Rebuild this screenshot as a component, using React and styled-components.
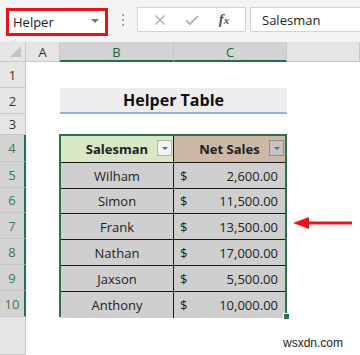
import { Fragment } from "react";
import styled, { createGlobalStyle } from "styled-components";

const GlobalStyle = createGlobalStyle`
  html, body {
    margin: 0;
    padding: 0;
    background: #ffffff;
    font-family: "Open Sans", "Liberation Sans", sans-serif;
  }
`;

const Page = styled.div`
  width: 360px;
  height: 355px;
  overflow: hidden;
  position: relative;
  background: #ffffff;
`;

const Toolbar = styled.div`
  height: 42px;
  background: #f3f3f3;
  display: flex;
  align-items: flex-start;
  padding-top: 7px;
  box-sizing: border-box;
`;

const NameBox = styled.div`
  margin-left: 6px;
  width: 102px;
  height: 28px;
  box-sizing: border-box;
  border: 3px solid #e3131b;
  background: #ffffff;
  display: flex;
  align-items: center;
  justify-content: space-between;
  padding: 0 6px 0 4px;
  margin-top: 1px;
  font-size: 13px;
  color: #222;
`;

const Caret = styled.span`
  width: 0;
  height: 0;
  border-left: 4px solid transparent;
  border-right: 4px solid transparent;
  border-top: 4px solid #777;
  margin-top: -2px;
`;

const Dots = styled.div`
  width: 29px;
  display: flex;
  flex-direction: column;
  align-items: center;
  gap: 3px;
  padding-top: 7px;
  span {
    width: 2px;
    height: 2px;
    background: #a8a8a8;
  }
`;

const FxBox = styled.div`
  width: 109px;
  height: 25px;
  box-sizing: border-box;
  border: 1px solid #d4d4d4;
  background: #ffffff;
  display: flex;
  align-items: center;
  justify-content: space-around;
  padding: 0 6px;
  color: #b3b3b3;
`;

const Fx = styled.span`
  font-family: "Liberation Serif", "DejaVu Serif", serif;
  font-style: italic;
  font-weight: 700;
  font-size: 15px;
  color: #555;
  span {
    font-size: 11px;
  }
`;

const FormulaInput = styled.div`
  margin-left: 4px;
  flex: 1;
  height: 25px;
  box-sizing: border-box;
  border: 1px solid #d4d4d4;
  border-right: none;
  background: #ffffff;
  display: flex;
  align-items: center;
  padding-left: 11px;
  font-size: 13px;
  color: #222;
`;

const Sheet = styled.div`
  display: grid;
  grid-template-columns: 26px 34px 114px 113px 1fr;
  grid-template-rows: 20px 26px 26px 21px 27px 26px 25px 26px 26px 26px 26px 1fr;
  height: 313px;
  position: relative;
`;

const Corner = styled.div`
  grid-column: 1;
  grid-row: 1;
  background: #e6e6e6;
  border-right: 1px solid #c8c8c8;
  border-bottom: 1px solid #c8c8c8;
  box-sizing: border-box;
  position: relative;
  &::after {
    content: "";
    position: absolute;
    right: 4px;
    bottom: 4px;
    width: 0;
    height: 0;
    border-left: 11px solid transparent;
    border-bottom: 11px solid #c2c2c2;
  }
`;

const ColHead = styled.div`
  grid-row: 1;
  grid-column: ${(p) => p.$col};
  background: ${(p) => (p.$sel ? "#d3d3d3" : "#e6e6e6")};
  border-right: 1px solid #c8c8c8;
  border-bottom: ${(p) => (p.$sel ? "2px solid #217346" : "1px solid #c8c8c8")};
  box-sizing: border-box;
  display: flex;
  align-items: center;
  justify-content: center;
  font-size: 13px;
  color: ${(p) => (p.$sel ? "#2c5e3c" : "#333")};
  padding-top: 1px;
`;

const RowHead = styled.div`
  grid-column: 1;
  background: ${(p) => (p.$sel ? "#d3d3d3" : "#e6e6e6")};
  border-right: ${(p) => (p.$sel ? "2px solid #217346" : "1px solid #c8c8c8")};
  border-bottom: 1px solid #c8c8c8;
  box-sizing: border-box;
  display: flex;
  align-items: center;
  justify-content: center;
  font-size: 13px;
  color: ${(p) => (p.$sel ? "#3c7a50" : "#333")};
`;

const Title = styled.div`
  grid-column: 3 / 5;
  grid-row: 3;
  background: #ededed;
  border-bottom: 2px solid #9bb0d8;
  box-sizing: border-box;
  display: flex;
  align-items: center;
  justify-content: center;
  font-weight: 700;
  font-size: 16px;
  color: #111;
`;

const Table = styled.div`
  grid-column: 3 / 5;
  grid-row: 5 / 12;
  margin: -1px 0 0 -1px;
  border: 2px solid #2e7048;
  display: grid;
  grid-template-columns: 113px 1fr;
  grid-template-rows: 27px 26px 25px 26px 26px 26px 26px;
  position: relative;
  font-size: 13px;
  color: #222;
`;

const Cell = styled.div`
  background: ${(p) => p.$bg || "#cfcfcf"};
  border-bottom: ${(p) => (p.$last ? "none" : "1px solid #1a1a1a")};
  border-right: ${(p) => (p.$right ? "none" : "1px solid #1a1a1a")};
  box-sizing: border-box;
  display: flex;
  align-items: center;
  justify-content: ${(p) => (p.$money ? "space-between" : "center")};
  padding: ${(p) => (p.$money ? "0 7px 0 6px" : "0")};
  font-weight: ${(p) => (p.$head ? 700 : 400)};
  position: relative;
`;

const FilterBtn = styled.span`
  position: absolute;
  right: 1px;
  top: 4px;
  width: 15px;
  height: 16px;
  box-sizing: border-box;
  border: 1px solid ${(p) => (p.$dark ? "#8f8f8f" : "#b5b5b5")};
  background: ${(p) => (p.$dark ? "#c3c3c3" : "#f4f4f4")};
  display: flex;
  align-items: center;
  justify-content: center;
  &::after {
    content: "";
    width: 0;
    height: 0;
    border-left: 3px solid transparent;
    border-right: 3px solid transparent;
    border-top: 3px solid #666;
  }
`;

const Handle = styled.span`
  position: absolute;
  right: -5px;
  bottom: -5px;
  width: 5px;
  height: 5px;
  background: #2e7048;
  border: 1px solid #ffffff;
`;

const Arrow = styled.svg`
  position: absolute;
  left: 293px;
  top: 215px;
`;

const Watermark = styled.div`
  position: absolute;
  left: 283px;
  top: 336px;
  font-family: "Liberation Sans", Arial, sans-serif;
  font-size: 12px;
  color: #222;
`;

const rows = [
  ["Wilham", "2,600.00"],
  ["Simon", "11,500.00"],
  ["Frank", "13,500.00"],
  ["Nathan", "17,000.00"],
  ["Jaxson", "5,500.00"],
  ["Anthony", "10,000.00"],
];

export default function App() {
  return (
    <Page>
      <GlobalStyle />
      <Toolbar>
        <NameBox>
          Helper
          <Caret />
        </NameBox>
        <Dots>
          <span />
          <span />
          <span />
        </Dots>
        <FxBox>
          <svg width="12" height="12" viewBox="0 0 12 12">
            <path d="M1.5 1.5 L10.5 10.5 M10.5 1.5 L1.5 10.5" stroke="#b3b3b3" strokeWidth="1.5" fill="none" />
          </svg>
          <svg width="14" height="12" viewBox="0 0 14 12">
            <path d="M1 6.5 L5 10 L13 2" stroke="#b3b3b3" strokeWidth="1.8" fill="none" />
          </svg>
          <Fx>
            f<span>x</span>
          </Fx>
        </FxBox>
        <FormulaInput>Salesman</FormulaInput>
      </Toolbar>
      <Sheet>
        <Corner />
        <ColHead $col={2}>A</ColHead>
        <ColHead $col={3} $sel>B</ColHead>
        <ColHead $col={4} $sel>C</ColHead>
        <ColHead $col={5} />
        {Array.from({ length: 10 }, (_, i) => (
          <RowHead key={i} $sel={i >= 3}>
            {i + 1}
          </RowHead>
        ))}
        <RowHead />
        <Title>Helper Table</Title>
        <Table>
          <Cell $bg="#d8e7c6" $head>
            Salesman
            <FilterBtn />
          </Cell>
          <Cell $bg="#cdb7a6" $head $right>
            Net Sales
            <FilterBtn $dark />
          </Cell>
          {rows.map(([name, amount], i) => (
            <Fragment key={name}>
              <Cell $last={i === rows.length - 1}>{name}</Cell>
              <Cell $money $right $last={i === rows.length - 1}>
                <span>$</span>
                <span>{amount}</span>
              </Cell>
            </Fragment>
          ))}
          <Handle />
        </Table>
      </Sheet>
      <Arrow width="62" height="16" viewBox="0 0 62 16">
        <path d="M14 8 L59 8" stroke="#e8141b" strokeWidth="3" />
        <path d="M0 8 L16 2 L16 14 Z" fill="#e8141b" />
      </Arrow>
      <Watermark>wsxdn.com</Watermark>
    </Page>
  );
}
